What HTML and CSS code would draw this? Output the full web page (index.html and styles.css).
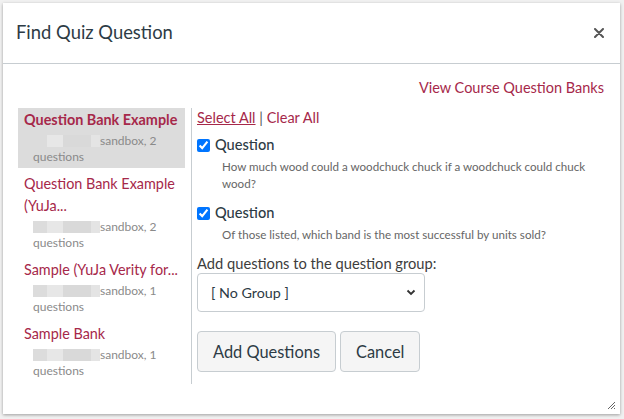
FILE: index.html
```html
<!DOCTYPE html>
<html>
<head>
<meta charset="utf-8">
<link rel="stylesheet" href="styles.css">
</head>
<body>
<div class="dialog">
  <div class="header">
    <h1 class="title">Find Quiz Question</h1>
    <span class="close">
      <svg width="10" height="10" viewBox="0 0 10 10"><path d="M1 1 L9 9 M9 1 L1 9" stroke="#555" stroke-width="2" stroke-linecap="round"/></svg>
    </span>
  </div>
  <div class="body">
    <div class="toplink"><a class="link" href="#">View Course Question Banks</a></div>
    <div class="content">
      <ul class="banks">
        <li class="bank selected">
          <div class="bank-title">Question Bank Example</div>
          <div class="bank-sub"><span class="redact"></span>sandbox, 2<br>questions</div>
        </li>
        <li class="bank">
          <div class="bank-title">Question Bank Example (YuJa...</div>
          <div class="bank-sub"><span class="redact"></span>sandbox, 2<br>questions</div>
        </li>
        <li class="bank">
          <div class="bank-title">Sample (YuJa Verity for...</div>
          <div class="bank-sub"><span class="redact"></span>sandbox, 1<br>questions</div>
        </li>
        <li class="bank">
          <div class="bank-title">Sample Bank</div>
          <div class="bank-sub"><span class="redact"></span>sandbox, 1<br>questions</div>
        </li>
      </ul>
      <div class="panel">
        <div class="selectors"><a class="link underline" href="#">Select All</a> <span class="sep">|</span> <a class="link" href="#">Clear All</a></div>
        <div class="question">
          <label class="q-label"><input type="checkbox" checked class="cb"><span>Question</span></label>
          <div class="q-desc">How much wood could a woodchuck chuck if a woodchuck could chuck wood?</div>
        </div>
        <div class="question">
          <label class="q-label"><input type="checkbox" checked class="cb"><span>Question</span></label>
          <div class="q-desc">Of those listed, which band is the most successful by units sold?</div>
        </div>
        <div class="group-label">Add questions to the question group:</div>
        <div class="select">
          <span>[ No Group ]</span>
          <svg width="10" height="7" viewBox="0 0 10 7"><path d="M1.5 1.5 L5 5 L8.5 1.5" fill="none" stroke="#333" stroke-width="1.8"/></svg>
        </div>
        <div class="actions">
          <button class="btn">Add Questions</button>
          <button class="btn">Cancel</button>
        </div>
      </div>
    </div>
  </div>
  <span class="grip">
    <svg width="10" height="10" viewBox="0 0 10 10"><path d="M9 2 L2 9 M9 5 L5 9 M9 8 L8 9" stroke="#666" stroke-width="1"/></svg>
  </span>
</div>
</body>
</html>
```
FILE: styles.css
```css
html, body {
  margin: 0;
  padding: 0;
}
body {
  background: #f1f1f1;
  font-family: Lato, "Open Sans", sans-serif;
  color: #2d3b45;
  width: 624px;
  height: 419px;
  overflow: hidden;
}
.dialog {
  position: relative;
  margin: 3px 0 0 3px;
  width: 617px;
  height: 411px;
  background: #fff;
  box-shadow: 0 1px 3px rgba(0,0,0,0.35);
  box-sizing: border-box;
}
.header {
  height: 61px;
  border-bottom: 1px solid #c7cdd1;
  display: flex;
  align-items: center;
  justify-content: space-between;
  padding: 0 16px 0 13px;
  box-sizing: border-box;
}
.title {
  margin: 0;
  font-size: 18.4px;
  font-weight: 400;
  color: #2d3b45;
  position: relative;
  top: -1px;
}
.close {
  display: flex;
}
.body {
  padding: 15px 16px 0 15px;
}
.toplink {
  text-align: right;
  font-size: 14.5px;
  line-height: 18px;
}
.link {
  color: #a6284a;
  text-decoration: none;
}
.underline {
  text-decoration: underline;
}
.content {
  display: flex;
  margin-top: 11px;
}
.banks {
  list-style: none;
  margin: 0;
  padding: 0;
  width: 167px;
  display: flex;
  flex-direction: column;
  gap: 4px;
}
.bank {
  padding: 1px 6px 3px 6px;
}
.bank.selected {
  background: #dcdcdc;
}
.bank-title {
  color: #a6284a;
  font-size: 14.4px;
  line-height: 22px;
}
.selected .bank-title {
  font-weight: 700;
  font-size: 14.4px;
}
.bank-sub {
  margin-top: 2px;
  padding-left: 9px;
  font-size: 12px;
  line-height: 16px;
  color: #8a8a8a;
}
.redact {
  display: inline-block;
  width: 67px;
  height: 12px;
  vertical-align: -2px;
  background: linear-gradient(90deg, #dcdcdc 0 14px, #e7e7e7 14px 30px, #d9d9d9 30px 58px, #e4e4e4 58px 67px);
  filter: blur(0.6px);
}
.panel {
  border-left: 1px solid #c7cdd1;
  margin-left: 6px;
  padding: 1px 0 12px 5px;
  flex: 1;
}
.selectors {
  font-size: 14.5px;
  line-height: 18px;
}
.sep {
  color: #555;
}
.question {
  padding-top: 8px;
}
.q-label {
  display: flex;
  align-items: center;
  gap: 5px;
  font-size: 14.6px;
  line-height: 20px;
  color: #2d3b45;
  font-weight: 500;
}
.cb {
  margin: 0;
  width: 13px;
  height: 13px;
}
.q-desc {
  padding: 3px 0 3px 25px;
  font-size: 11.6px;
  line-height: 17px;
  color: #666;
}
.group-label {
  margin-top: 8px;
  font-size: 14.7px;
  line-height: 18px;
  color: #3d3d3d;
}
.select {
  margin-top: 1px;
  width: 228px;
  height: 39px;
  box-sizing: border-box;
  border: 1px solid #c7cdd1;
  border-radius: 4px;
  display: flex;
  align-items: center;
  justify-content: space-between;
  padding: 0 8px 0 13px;
  font-size: 14.3px;
  color: #2d3b45;
}
.actions {
  margin-top: 19px;
  display: flex;
  gap: 4px;
}
.btn {
  font-family: Lato, "Open Sans", sans-serif;
  font-size: 16.4px;
  color: #2d3b45;
  background: #f5f5f5;
  border: 1px solid #c7cdd1;
  border-radius: 4px;
  height: 41px;
  padding: 0 15px;
}
.grip {
  position: absolute;
  right: 4px;
  bottom: 4px;
  display: flex;
}
```
